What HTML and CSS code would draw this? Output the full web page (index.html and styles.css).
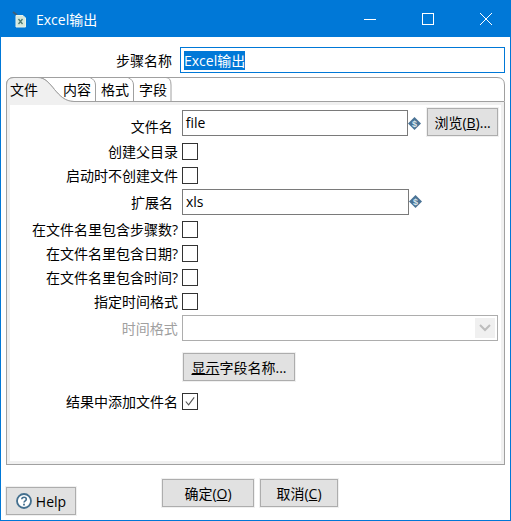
FILE: index.html
```html
<!DOCTYPE html>
<html>
<head>
    <meta charset="UTF-8">
    <title>Excel输出</title>
    <link rel="stylesheet" href="styles.css">
</head>
<body>
<div class="window">
    <!-- Title bar -->
    <div class="titlebar">
        <svg class="app-icon" width="16" height="18" viewBox="0 0 16 18">
            <path d="M1 2l4 3" stroke="#3d5f78" stroke-width="2" fill="none"/>
            <path d="M4 5.5h7l2.500 2.500v9h-9.500z" fill="#d5e8dc" stroke="#e8f2ea"/>
            <path d="M6.500 9l4 5M10.500 9l-4 5" stroke="#4e7a72" stroke-width="1.300"/>
        </svg>
        <span class="title">Excel输出</span>
        <div class="winbtns">
            <svg width="14" height="14" viewBox="0 0 14 14"><path d="M1 7.500h12" stroke="#fff" fill="none"/></svg>
            <svg width="14" height="14" viewBox="0 0 14 14"><rect x="1.500" y="1.500" width="11" height="11" stroke="#fff" fill="none"/></svg>
            <svg width="14" height="14" viewBox="0 0 14 14"><path d="M1 1l12 12M13 1l-12 12" stroke="#fff" fill="none"/></svg>
        </div>
    </div>

    <div class="dialog">
        <!-- Step name -->
        <div class="name-row">
            <label class="name-label">步骤名称</label>
            <div class="name-input"><span class="selected">Excel输出</span></div>
        </div>

        <!-- Tabs -->
        <div class="tabfolder">
            <div class="tabstrip">
                <svg class="tabshape" width="499" height="25" viewBox="0 0 499 25">
                    <path d="M.5 25V8Q.5 .5 8 .5H32C46 .5 50 24.500 68 24.500H498.500V8Q498.500 .5 491 .5" fill="none" stroke="#a0a0a0"/>
                    <path d="M1 25V8Q1 1 8 1H32C46 1 50 24 68 24V25z" fill="#f0f0f0"/>
                    <path d="M32 .5H91Q94 .5 127 .5H160Q165 .5 165 8V24" fill="none" stroke="#a0a0a0"/>
                    <path d="M.5 25V8Q.5 .5 8 .5H32C46 .5 50 24.500 68 24.500" fill="none" stroke="#a0a0a0"/>
                    <path d="M89.500 24V8Q89.500 3 84 .5M127.500 24V8Q127.500 3 122 .5" fill="none" stroke="#a0a0a0"/>
                    <path d="M32 .5H491" stroke="#a0a0a0"/>
                </svg>
                <span class="tab tab-file">文件</span>
                <span class="tab tab-content">内容</span>
                <span class="tab tab-format">格式</span>
                <span class="tab tab-field">字段</span>
            </div>

            <div class="tabbody">
                <div class="row row-file">
                    <label class="lbl lbl-text">文件名</label>
                    <div class="input input-file">file</div>
                    <svg class="var-icon" width="13" height="13" viewBox="0 0 13 13">
                        <path d="M6.500 0L13 6.500L6.500 13L0 6.500z" fill="#4a7396"/>
                        <text x="6.500" y="9.500" class="var-text">$</text>
                    </svg>
                    <button class="btn btn-browse">浏览(<u>B</u>)...</button>
                </div>
                <div class="row row-check first-check">
                    <label class="lbl">创建父目录</label><span class="check"></span>
                </div>
                <div class="row row-check">
                    <label class="lbl">启动时不创建文件</label><span class="check"></span>
                </div>
                <div class="row row-input">
                    <label class="lbl lbl-text">扩展名</label>
                    <div class="input input-file">xls</div>
                    <svg class="var-icon" width="13" height="13" viewBox="0 0 13 13">
                        <path d="M6.500 0L13 6.500L6.500 13L0 6.500z" fill="#4a7396"/>
                        <text x="6.500" y="9.500" class="var-text">$</text>
                    </svg>
                </div>
                <div class="row row-check gap1">
                    <label class="lbl">在文件名里包含步骤数?</label><span class="check"></span>
                </div>
                <div class="row row-check">
                    <label class="lbl">在文件名里包含日期?</label><span class="check"></span>
                </div>
                <div class="row row-check">
                    <label class="lbl">在文件名里包含时间?</label><span class="check"></span>
                </div>
                <div class="row row-check">
                    <label class="lbl">指定时间格式</label><span class="check"></span>
                </div>
                <div class="row row-input">
                    <label class="lbl disabled">时间格式</label>
                    <div class="combo">
                        <span class="combo-arrow">
                            <svg width="12" height="8" viewBox="0 0 12 8"><path d="M1 1l5 5 5-5" fill="none" stroke="#bdbdbd" stroke-width="2"/></svg>
                        </span>
                    </div>
                </div>
                <div class="row row-button">
                    <button class="btn btn-fields"><u>显示</u>字段名称...</button>
                </div>
                <div class="row row-check last-check">
                    <label class="lbl">结果中添加文件名</label>
                    <span class="check">
                        <svg width="15" height="15" viewBox="0 0 15 15"><path d="M3 7.500l3 3.500 6-8" fill="none" stroke="#555" stroke-width="1.200"/></svg>
                    </span>
                </div>
            </div>
        </div>

        <!-- Bottom buttons -->
        <div class="footer">
            <button class="btn btn-help">
                <svg width="16" height="16" viewBox="0 0 16 16">
                    <circle cx="8" cy="8" r="7" fill="#fff" stroke="#44708f" stroke-width="1.800"/>
                    <path d="M5.800 6.200C5.800 3.600 10.300 3.700 10.300 6.200C10.300 7.800 8 7.800 8 9.600" fill="none" stroke="#44708f" stroke-width="1.600"/>
                    <rect x="7.100" y="10.700" width="1.800" height="1.800" fill="#44708f"/>
                </svg>
                Help
            </button>
            <button class="btn btn-ok">确定(<u>O</u>)</button>
            <button class="btn btn-cancel">取消(<u>C</u>)</button>
        </div>
    </div>
</div>
</body>
</html>
```

FILE: styles.css
```css
* {
    box-sizing: border-box;
}
html, body {
    margin: 0;
    padding: 0;
}
body {
    font-family: "Open Sans", "Noto Sans CJK SC", sans-serif;
    font-size: 14px;
    color: #000;
    background-color: #fff;
}
.window {
    width: 511px;
    height: 521px;
    border: 1px solid #0078d7;
    border-top: none;
    display: flex;
    flex-direction: column;
    overflow: hidden;
}
.titlebar {
    height: 37px;
    flex: none;
    background-color: #0078d7;
    color: #fff;
    display: flex;
    align-items: center;
    padding-left: 11px;
}
.app-icon {
    margin-right: 8px;
}
.title {
    font-size: 14px;
}
.winbtns {
    margin-left: auto;
    display: flex;
    gap: 44px;
    padding-right: 17px;
}

.dialog {
    flex: 1;
    padding: 10px 5px 0 5px;
    display: flex;
    flex-direction: column;
}
.name-row {
    display: flex;
    align-items: center;
    height: 26px;
}
.name-label {
    width: 166px;
    text-align: right;
}
.name-input {
    margin-left: 8px;
    flex: 1;
    height: 26px;
    border: 1px solid #0078d7;
    padding: 3px 3px;
    line-height: 19px;
}
.selected {
    display: inline-block;
    height: 19px;
    background-color: #0078d7;
    color: #fff;
}

.tabfolder {
    margin-top: 4px;
    height: 388px;
    display: flex;
    flex-direction: column;
}
.tabstrip {
    height: 25px;
    flex: none;
    position: relative;
}
.tabshape {
    position: absolute;
    left: 0;
    top: 0;
}
.tab {
    position: absolute;
    top: 3px;
    line-height: 20px;
}
.tab-file { left: 4px; }
.tab-content { left: 57px; }
.tab-format { left: 95px; }
.tab-field { left: 133px; }

.tabbody {
    flex: 1;
    border: 1px solid #a0a0a0;
    border-top: none;
    box-shadow: inset 0 3px 0 #f0f0f0, inset 3px 0 0 #f0f0f0, inset -3px 0 0 #f0f0f0, inset 0 -3px 0 #f0f0f0;
    padding: 6px 6px 0 4px;
}
.row {
    display: flex;
    align-items: center;
}
.lbl {
    width: 167px;
    text-align: right;
    margin-right: 4px;
    white-space: nowrap;
}
.lbl-text {
    padding-right: 5px;
}
.disabled {
    color: #a0a0a0;
}
.row-file {
    height: 28px;
    align-items: flex-end;
}
.row-file .var-icon {
    margin-bottom: 6px;
}
.row-check {
    height: 24px;
}
.first-check {
    margin-top: 3px;
}
.row-input {
    height: 29px;
}
.gap1 {
    margin-top: 1px;
}
.row-button {
    height: 28px;
    margin-top: 11px;
    padding-left: 172px;
}
.last-check {
    margin-top: 8px;
}
.input {
    height: 26px;
    border: 1px solid #7a7a7a;
    background-color: #fff;
    padding-left: 3px;
    line-height: 23px;
    font-size: 14px;
}
.input-file {
    width: 227px;
}
.var-icon {
    flex: none;
    margin-left: 0;
}
.var-text {
    font-family: "Liberation Sans", sans-serif;
    font-size: 9px;
    font-weight: bold;
    fill: #dbe5ec;
    text-anchor: middle;
}
.check {
    width: 16px;
    height: 17px;
    border: 1px solid #333;
    background-color: #fff;
    display: flex;
    align-items: center;
    justify-content: center;
    flex: none;
}
.combo {
    width: 317px;
    height: 26px;
    border: 1px solid #adadad;
    padding: 2px;
    display: flex;
    justify-content: flex-end;
}
.combo-arrow {
    width: 20px;
    background-color: #f0f0f0;
    display: flex;
    align-items: center;
    justify-content: center;
}
.btn {
    height: 28px;
    padding: 0;
    background-color: #e1e1e1;
    border: 1px solid #adadad;
    outline: 1px solid #f0f0f0;
    font-family: inherit;
    font-size: 14px;
    color: #000;
    white-space: nowrap;
}
.btn-browse {
    width: 71px;
    margin-left: 6px;
}
.btn-fields {
    width: 112px;
}

.footer {
    position: relative;
    flex: 1;
}
.btn-help {
    position: absolute;
    left: 0;
    top: 22px;
    width: 70px;
    display: flex;
    align-items: center;
    justify-content: center;
    gap: 4px;
}
.btn-ok {
    position: absolute;
    left: 156px;
    top: 14px;
    width: 92px;
}
.btn-cancel {
    position: absolute;
    left: 254px;
    top: 14px;
    width: 78px;
}
```
